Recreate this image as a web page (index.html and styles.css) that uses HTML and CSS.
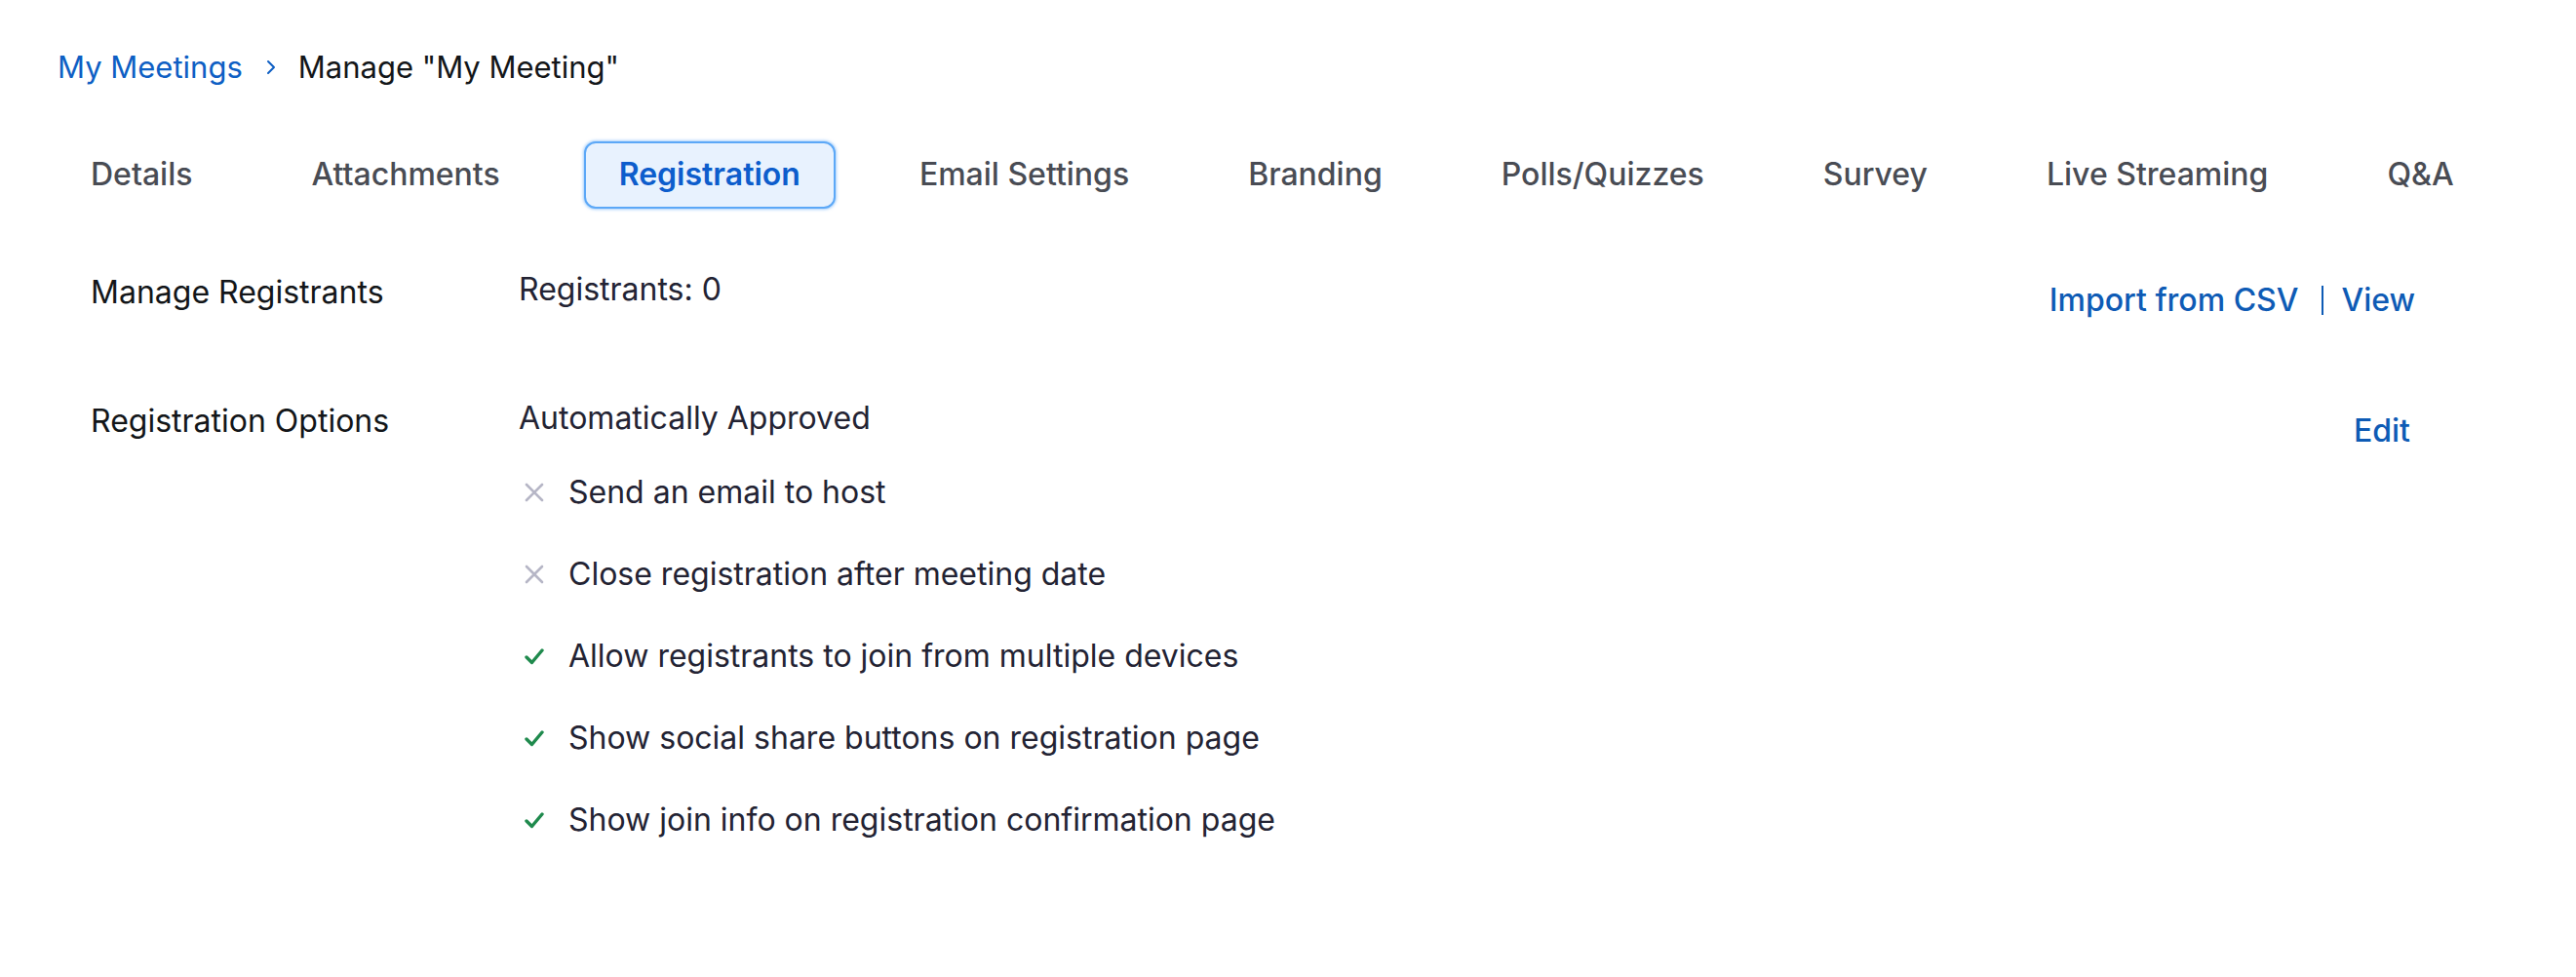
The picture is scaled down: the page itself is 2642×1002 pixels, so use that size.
FILE: index.html
```html
<!DOCTYPE html>
<html lang="en">
<head>
<meta charset="utf-8">
<title>Manage "My Meeting"</title>
<link rel="stylesheet" href="styles.css">
</head>
<body>
<div class="page">
  <nav class="breadcrumb">
    <a class="crumb-link" href="#">My Meetings</a>
    <svg class="crumb-sep" width="10" height="16" viewBox="0 0 10 16"><path d="M2 2 L8 8 L2 14" fill="none" stroke="#0e5fc4" stroke-width="2" stroke-linecap="round" stroke-linejoin="round"/></svg>
    <span class="crumb-current">Manage "My Meeting"</span>
  </nav>

  <div class="tabs">
    <div class="tab">Details</div>
    <div class="tab">Attachments</div>
    <div class="tab active">Registration</div>
    <div class="tab">Email Settings</div>
    <div class="tab">Branding</div>
    <div class="tab">Polls/Quizzes</div>
    <div class="tab">Survey</div>
    <div class="tab">Live Streaming</div>
    <div class="tab">Q&amp;A</div>
  </div>

  <div class="section">
    <div class="row row-registrants">
      <div class="label">Manage Registrants</div>
      <div class="value">Registrants: 0</div>
      <div class="actions">
        <a class="link" href="#">Import from CSV</a>
        <span class="divider"></span>
        <a class="link" href="#">View</a>
      </div>
    </div>

    <div class="row row-options">
      <div class="label">Registration Options</div>
      <div class="value">
        <div class="approval">Automatically Approved</div>
        <ul class="options">
          <li class="option">
            <span class="opt-icon"><svg width="22" height="22" viewBox="0 0 22 22"><path d="M3 3 L19 19 M19 3 L3 19" stroke="#b6b6c6" stroke-width="2.6" stroke-linecap="round"/></svg></span>
            <span>Send an email to host</span>
          </li>
          <li class="option">
            <span class="opt-icon"><svg width="22" height="22" viewBox="0 0 22 22"><path d="M3 3 L19 19 M19 3 L3 19" stroke="#b6b6c6" stroke-width="2.6" stroke-linecap="round"/></svg></span>
            <span>Close registration after meeting date</span>
          </li>
          <li class="option">
            <span class="opt-icon"><svg width="20" height="18" viewBox="0 0 20 18"><path d="M2 10 L7.5 15.5 L18 3" fill="none" stroke="#1f8a4d" stroke-width="3.4" stroke-linecap="round" stroke-linejoin="round"/></svg></span>
            <span>Allow registrants to join from multiple devices</span>
          </li>
          <li class="option">
            <span class="opt-icon"><svg width="20" height="18" viewBox="0 0 20 18"><path d="M2 10 L7.5 15.5 L18 3" fill="none" stroke="#1f8a4d" stroke-width="3.4" stroke-linecap="round" stroke-linejoin="round"/></svg></span>
            <span>Show social share buttons on registration page</span>
          </li>
          <li class="option">
            <span class="opt-icon"><svg width="20" height="18" viewBox="0 0 20 18"><path d="M2 10 L7.5 15.5 L18 3" fill="none" stroke="#1f8a4d" stroke-width="3.4" stroke-linecap="round" stroke-linejoin="round"/></svg></span>
            <span>Show join info on registration confirmation page</span>
          </li>
        </ul>
      </div>
      <div class="actions actions-edit">
        <a class="link" href="#">Edit</a>
      </div>
    </div>
  </div>
</div>
</body>
</html>
```

FILE: styles.css
```css
* { box-sizing: border-box; }

html, body {
  margin: 0;
  padding: 0;
  background: #ffffff;
}

body {
  font-family: Inter, "Noto Sans", "Liberation Sans", sans-serif;
  font-size: 32px;
  line-height: 40px;
  color: #131619;
}

a { text-decoration: none; }

.page {
  padding: 49px 87px 0 59px;
}

.breadcrumb {
  display: flex;
  align-items: center;
  height: 40px;
  font-size: 31px;
}

.crumb-link {
  color: #0e5fc4;
}

.crumb-sep {
  margin: 0 23px 0 24px;
}

.crumb-current {
  color: #131619;
}

.tabs {
  display: flex;
  gap: 50px;
  margin-top: 56px;
  margin-left: -2px;
}

.tab {
  padding: 12px 34px 13px;
  border: 2px solid transparent;
  border-radius: 12px;
  color: #494c54;
  font-weight: 500;
  white-space: nowrap;
}

.tab.active {
  background: #e8f2fe;
  border-color: #5ca8f7;
  box-shadow: 0 0 3px 1px rgba(92, 168, 247, 0.55);
  color: #0d5dcc;
  font-weight: 600;
}

.section {
  padding-left: 34px;
  padding-right: 78px;
  margin-top: 63px;
}

.row {
  display: grid;
  grid-template-columns: 439px 1fr auto;
  align-items: start;
}

.row-options {
  margin-top: 81px;
}

.label {
  padding-top: 3px;
  color: #131619;
}

.value {
  color: #232333;
}

.actions {
  display: flex;
  align-items: center;
  padding-top: 11px;
}

.actions-edit {
  padding-top: 13px;
  padding-right: 5px;
}

.link {
  color: #0e5bb5;
  font-weight: 500;
}

.divider {
  display: block;
  width: 2px;
  height: 30px;
  background: #0e5bb5;
  margin: 0 18px 0 24px;
}

.options {
  list-style: none;
  margin: 36px 0 0;
  padding: 0;
  display: flex;
  flex-direction: column;
  gap: 44px;
}

.option {
  display: flex;
  align-items: center;
  height: 40px;
}

.opt-icon {
  width: 32px;
  display: flex;
  justify-content: center;
  margin-right: 19px;
}
```
